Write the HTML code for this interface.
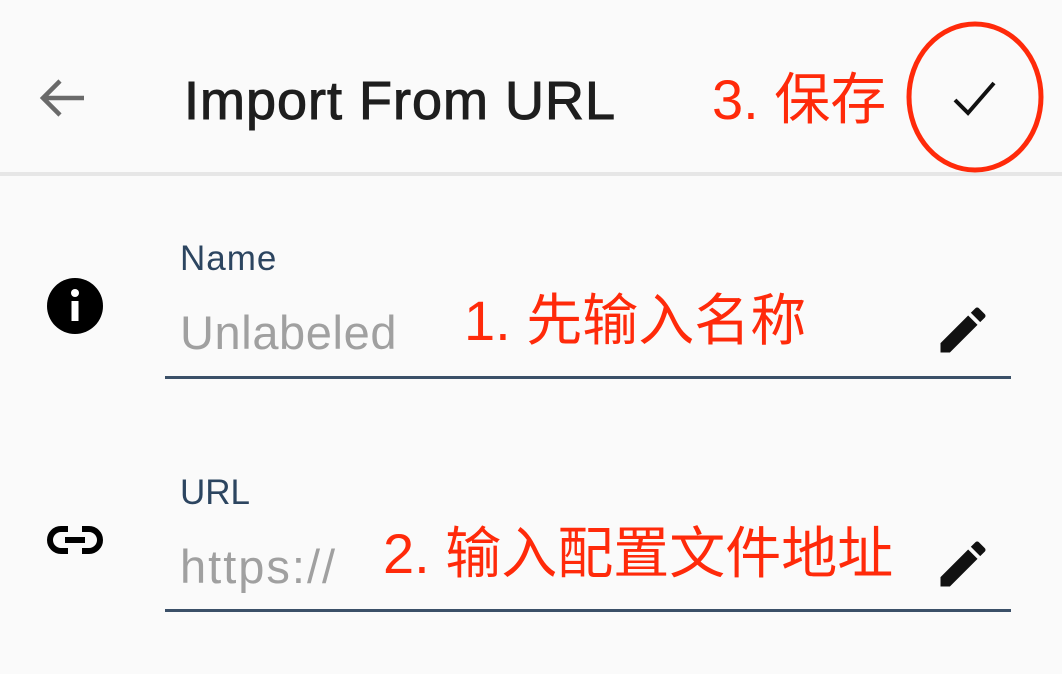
<!DOCTYPE html><html><head><meta charset="utf-8"><style>
body{margin:0;width:1062px;height:674px;background:#fafafa;position:relative;overflow:hidden;font-family:"Liberation Sans","Noto Sans CJK SC",sans-serif}
.a{position:absolute;white-space:nowrap;line-height:1}
.red{color:#ff2a0a;font-size:56px}
</style></head><body>
<div class="a" style="left:0;top:172px;width:1062px;height:4px;background:#e6e6e6"></div>
<svg class="a" style="left:36px;top:76px" width="52" height="44" viewBox="0 0 52 44"><path d="M48 22H8M24 5L7 22l17 17" stroke="#6a6a6a" stroke-width="4.5" fill="none"/></svg>
<div class="a" style="left:184px;top:74px;font-size:54px;color:#1e1e1e;-webkit-text-stroke:1px #1e1e1e;letter-spacing:1px">Import From URL</div>
<div class="a red" style="left:712px;top:72px">3. 保存</div>
<svg class="a" style="left:900px;top:18px" width="150" height="158"><ellipse cx="75" cy="79" rx="66" ry="73" stroke="#ff2a0a" stroke-width="5" fill="none"/><path d="M55 82l13 13 26-30" stroke="#111" stroke-width="4" fill="none"/></svg>
<svg class="a" style="left:46px;top:277px" width="58" height="58"><circle cx="29" cy="29" r="28" fill="#000"/><rect x="25.5" y="24" width="7" height="20" fill="#fff"/><circle cx="29" cy="16" r="4" fill="#fff"/></svg>
<div class="a" style="left:180px;top:241px;font-size:35px;color:#2c4560;letter-spacing:1px">Name</div>
<div class="a" style="left:180px;top:309px;font-size:47px;color:#a0a0a0;letter-spacing:0.6px">Unlabeled</div>
<div class="a red" style="left:464px;top:293px">1. 先输入名称</div>
<svg class="a" style="left:932px;top:300px" width="62" height="60" viewBox="0 0 24 24"><path d="M3 17.25V21h3.75L17.81 9.94l-3.75-3.75L3 17.25zM20.71 7.04a1 1 0 000-1.41l-2.34-2.34a1 1 0 00-1.410 0l-1.83 1.83 3.75 3.75 1.83-1.83z" fill="#111"/></svg>
<div class="a" style="left:165px;top:376px;width:846px;height:3px;background:#3b5068"></div>
<svg class="a" style="left:46px;top:522px" width="58" height="36" viewBox="0 0 58 36"><path d="M22 7H15a11 11 0 000 22h7M36 7h7a11 11 0 010 22h-7M19 18h20" stroke="#000" stroke-width="6" fill="none"/></svg>
<div class="a" style="left:180px;top:475px;font-size:35px;color:#2c4560">URL</div>
<div class="a" style="left:180px;top:543px;font-size:47px;color:#a0a0a0;letter-spacing:2px">https://</div>
<div class="a red" style="left:383px;top:526px">2. 输入配置文件地址</div>
<svg class="a" style="left:932px;top:534px" width="62" height="60" viewBox="0 0 24 24"><path d="M3 17.25V21h3.75L17.81 9.94l-3.75-3.75L3 17.25zM20.71 7.04a1 1 0 000-1.41l-2.34-2.34a1 1 0 00-1.41 0l-1.83 1.83 3.75 3.75 1.83-1.83z" fill="#111"/></svg>
<div class="a" style="left:165px;top:609px;width:846px;height:3px;background:#3b5068"></div>
</body></html>
